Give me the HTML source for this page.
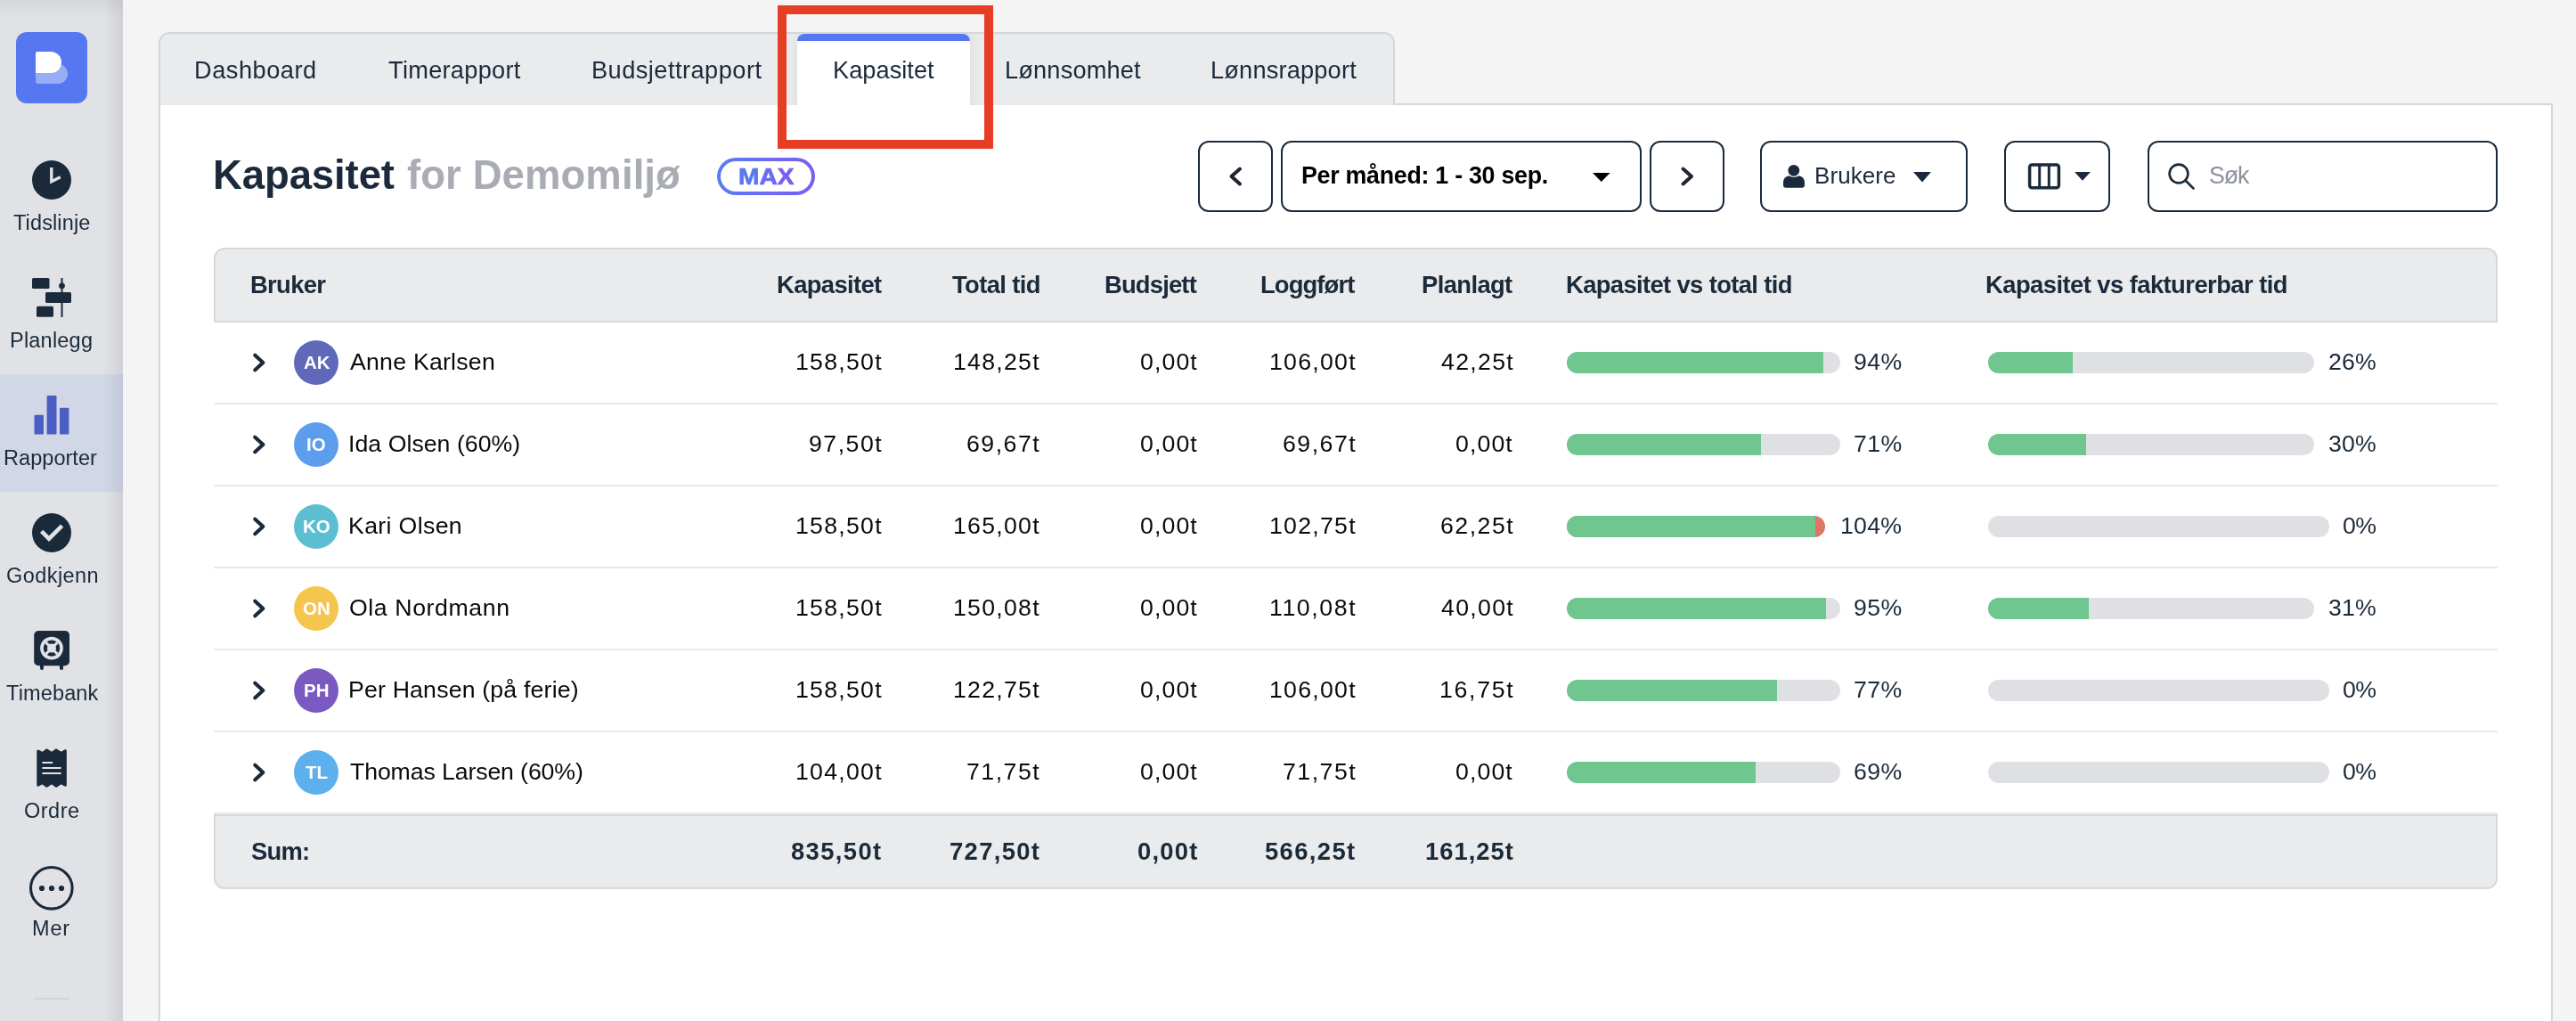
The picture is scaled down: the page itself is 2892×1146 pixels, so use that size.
<!DOCTYPE html><html><head><meta charset="utf-8"><style>
html,body{margin:0;padding:0;}body{width:2892px;height:1146px;position:relative;overflow:hidden;background:#f4f4f4;font-family:"Liberation Sans", sans-serif;}
.a{position:absolute;box-sizing:border-box;}.t{position:absolute;white-space:nowrap;line-height:1;will-change:transform;}

</style></head><body>
<div class="a" style="left:0;top:0;width:138px;height:1146px;background:#e1e2e6"></div>
<div class="a" style="left:0;top:420px;width:138px;height:132px;background:#d2d7e7"></div>
<div class="a" style="left:116px;top:0;width:22px;height:1146px;background:linear-gradient(to right,rgba(40,45,60,0),rgba(40,45,60,0.09))"></div>
<div class="a" style="left:0;top:0;width:138px;height:22px;background:linear-gradient(to bottom,rgba(40,45,60,0.06),rgba(40,45,60,0))"></div>
<div class="a" style="left:18px;top:36px;width:80px;height:80px;border-radius:12px;background:#5578f0"></div>
<div class="a" style="left:40px;top:71.5px;width:36px;height:22.5px;border-radius:0 11px 11px 3px;background:#99acf6"></div>
<div class="a" style="left:40px;top:58px;width:29px;height:24px;border-radius:2px 12px 12px 0;background:#fff"></div>
<svg class="a" style="left:0;top:0" width="138" height="1146" viewBox="0 0 138 1146"><circle cx="58" cy="202" r="22" fill="#1b2a3a"/><path d="M57.8 188 V203.8 L67.8 198.8" fill="none" stroke="#e1e2e6" stroke-width="3.4" stroke-linejoin="miter"/><rect x="36" y="312" width="19.5" height="12" rx="1.5" fill="#1b2a3a"/><rect x="51" y="328" width="29" height="12" rx="1.5" fill="#1b2a3a"/><rect x="41" y="343.7" width="19" height="12" rx="1.5" fill="#1b2a3a"/><rect x="68.5" y="312" width="2" height="44" fill="#1b2a3a"/><circle cx="69.5" cy="320.8" r="3.4" fill="#1b2a3a"/><rect x="38.5" y="465.8" width="10.5" height="21.8" rx="1.2" fill="#4a5ec3"/><rect x="52.6" y="444" width="10.9" height="43.6" rx="1.2" fill="#4a5ec3"/><rect x="67" y="457.7" width="10.4" height="29.9" rx="1.2" fill="#4a5ec3"/><circle cx="58" cy="598" r="22" fill="#1b2a3a"/><path d="M46.6 596.3 L55 604.7 L69.6 590.1" fill="none" stroke="#e1e2e6" stroke-width="4.6"/><rect x="38.2" y="708" width="39.8" height="39.2" rx="5" fill="#1b2a3a"/><rect x="45" y="744" width="4" height="8" rx="2" fill="#1b2a3a"/><rect x="67" y="744" width="4" height="8" rx="2" fill="#1b2a3a"/><circle cx="58" cy="727.6" r="12.9" fill="#e1e2e6"/><circle cx="58" cy="727.6" r="9.2" fill="#1b2a3a"/><path d="M51.5 721.1 L64.5 734.1 M64.5 721.1 L51.5 734.1" stroke="#e1e2e6" stroke-width="3"/><circle cx="58" cy="727.6" r="5" fill="#e1e2e6"/><path d="M42.8 843 L47.4 845.6 L52.5 841.9 L58 845.6 L63.1 841.9 L68.6 845.6 L73.3 842.7 L73.3 881.2 L68.6 878.6 L63.1 882.2 L58 878.6 L52.5 882.2 L47.4 878.6 L42.8 881.2 Z" fill="#1b2a3a" stroke="#1b2a3a" stroke-width="3" stroke-linejoin="round"/><rect x="47.4" y="855" width="11.8" height="2" fill="#e1e2e6"/><rect x="47.4" y="861" width="21.2" height="2" fill="#e1e2e6"/><rect x="47.4" y="867" width="21.2" height="2" fill="#e1e2e6"/><circle cx="57.8" cy="996.8" r="23.3" fill="none" stroke="#1b2a3a" stroke-width="3.1"/><circle cx="47" cy="997" r="3.1" fill="#1b2a3a"/><circle cx="58" cy="997" r="3.1" fill="#1b2a3a"/><circle cx="69" cy="997" r="3.1" fill="#1b2a3a"/><rect x="38" y="1120" width="40" height="2" fill="#d3d5da"/></svg>
<div class="a" style="left:178px;top:116px;width:2688px;height:1100px;background:#fff;border:2px solid #d3d7dc"></div>
<div class="a" style="left:178px;top:36px;width:1388px;height:82px;background:#eaebed;border:2px solid #d3d7dc;border-bottom:0;border-radius:12px 12px 0 0"></div>
<div class="a" style="left:860px;top:38px;width:264px;height:80px;overflow:hidden"><div class="a" style="left:35px;top:0;width:194px;height:90px;background:#fff;border-radius:8px 8px 0 0;overflow:hidden;box-shadow:0 0 14px rgba(30,40,60,0.08)"><div style="height:8px;background:#5578f0"></div></div></div>
<div class="a" style="left:873px;top:6px;width:242px;height:161px;border:10px solid #e83d25"></div>
<div class="a" style="left:805.2px;top:177px;width:109.5px;height:41.8px;border-radius:21px;padding:3.8px;background:linear-gradient(90deg,#5a7cf2,#7b5ef0)"><div style="width:100%;height:100%;background:#fff;border-radius:18px"></div></div>
<div class="a" style="left:1345.2px;top:158px;width:83.39999999999986px;height:79.5px;border:2.2px solid #1b2a3a;border-radius:12px;background:#fff"></div>
<div class="a" style="left:1437.6px;top:158px;width:405.4000000000001px;height:79.5px;border:2.2px solid #1b2a3a;border-radius:12px;background:#fff"></div>
<div class="a" style="left:1852px;top:158px;width:83.5px;height:79.5px;border:2.2px solid #1b2a3a;border-radius:12px;background:#fff"></div>
<div class="a" style="left:1976.4px;top:158px;width:233.0999999999999px;height:79.5px;border:2.2px solid #1b2a3a;border-radius:12px;background:#fff"></div>
<div class="a" style="left:2250.4px;top:158px;width:119.09999999999991px;height:79.5px;border:2.2px solid #1b2a3a;border-radius:12px;background:#fff"></div>
<div class="a" style="left:2410.5px;top:158px;width:393.0999999999999px;height:79.5px;border:2.2px solid #1b2a3a;border-radius:12px;background:#fff"></div>
<svg class="a" style="left:0;top:0" width="2892" height="260" viewBox="0 0 2892 260"><path d="M1392 189.5 L1382.5 198 L1392 206.5" fill="none" stroke="#1e2530" stroke-width="4" stroke-linecap="round" stroke-linejoin="round"/><path d="M1889.5 189.5 L1899 198 L1889.5 206.5" fill="none" stroke="#1e2530" stroke-width="4" stroke-linecap="round" stroke-linejoin="round"/><path d="M1788 194 L1807.6 194 L1797.8 204 Z" fill="#000"/><path d="M2148 193 L2168 193 L2158 204.4 Z" fill="#1b2a3a"/><path d="M2329 193 L2347 193 L2338 202.8 Z" fill="#1b2a3a"/><circle cx="2013.8" cy="191.3" r="6.4" fill="#1b2a3a"/><path d="M2005 210.8 L2023 210.8 Q2026 210.8 2026 207.8 L2026 205 Q2026 198.5 2019.5 197.3 Q2014 200.3 2008.5 197.3 Q2002 198.5 2002 205 L2002 207.8 Q2002 210.8 2005 210.8 Z" fill="#1b2a3a"/><rect x="2278.6" y="185.1" width="32.8" height="25.6" rx="2.6" fill="none" stroke="#1b2a3a" stroke-width="3.5"/><rect x="2288.2" y="185" width="3" height="26" fill="#1b2a3a"/><rect x="2298.8" y="185" width="3" height="26" fill="#1b2a3a"/><circle cx="2446" cy="195" r="10.4" fill="none" stroke="#1b2a3a" stroke-width="2.6"/><path d="M2453.5 202.5 L2462.5 211.5" stroke="#1b2a3a" stroke-width="2.6" stroke-linecap="round"/></svg>
<div class="a" style="left:240px;top:278px;width:2564px;height:84px;background:#eaebed;border:2px solid #d5d8dc;border-radius:12px 12px 0 0"></div>
<div class="a" style="left:240px;top:914px;width:2564px;height:84px;background:#eaebed;border:2px solid #d5d8dc;border-radius:0 0 12px 12px"></div>
<div class="a" style="left:240px;top:452px;width:2564px;height:2px;background:#e7e9ec"></div>
<div class="a" style="left:240px;top:544px;width:2564px;height:2px;background:#e7e9ec"></div>
<div class="a" style="left:240px;top:636px;width:2564px;height:2px;background:#e7e9ec"></div>
<div class="a" style="left:240px;top:728px;width:2564px;height:2px;background:#e7e9ec"></div>
<div class="a" style="left:240px;top:820px;width:2564px;height:2px;background:#e7e9ec"></div>
<div class="a" style="left:240px;top:912px;width:2564px;height:2px;background:#e7e9ec"></div>
<div class="a" style="left:1759px;top:395px;width:306.6999999999998px;height:24px;border-radius:12px;background:#dfe0e4;overflow:hidden"><div style="width:288.3px;height:24px;background:#6fc68e"></div></div>
<div class="a" style="left:2232px;top:395px;width:365.5999999999999px;height:24px;border-radius:12px;background:#dfe0e4;overflow:hidden"><div style="width:95.1px;height:24px;background:#6fc68e"></div></div>
<div class="a" style="left:1759px;top:487px;width:306.6999999999998px;height:24px;border-radius:12px;background:#dfe0e4;overflow:hidden"><div style="width:217.8px;height:24px;background:#6fc68e"></div></div>
<div class="a" style="left:2232px;top:487px;width:365.5999999999999px;height:24px;border-radius:12px;background:#dfe0e4;overflow:hidden"><div style="width:109.7px;height:24px;background:#6fc68e"></div></div>
<div class="a" style="left:1759px;top:579px;width:290px;height:24px;border-radius:12px;background:#dc7767;overflow:hidden"><div style="width:278.8px;height:24px;background:#6fc68e"></div></div>
<div class="a" style="left:2232px;top:579px;width:383px;height:24px;border-radius:12px;background:#dfe0e4;overflow:hidden"><div style="width:0.0px;height:24px;background:#6fc68e"></div></div>
<div class="a" style="left:1759px;top:671px;width:306.6999999999998px;height:24px;border-radius:12px;background:#dfe0e4;overflow:hidden"><div style="width:291.4px;height:24px;background:#6fc68e"></div></div>
<div class="a" style="left:2232px;top:671px;width:365.5999999999999px;height:24px;border-radius:12px;background:#dfe0e4;overflow:hidden"><div style="width:113.3px;height:24px;background:#6fc68e"></div></div>
<div class="a" style="left:1759px;top:763px;width:306.6999999999998px;height:24px;border-radius:12px;background:#dfe0e4;overflow:hidden"><div style="width:236.2px;height:24px;background:#6fc68e"></div></div>
<div class="a" style="left:2232px;top:763px;width:383px;height:24px;border-radius:12px;background:#dfe0e4;overflow:hidden"><div style="width:0.0px;height:24px;background:#6fc68e"></div></div>
<div class="a" style="left:1759px;top:855px;width:306.6999999999998px;height:24px;border-radius:12px;background:#dfe0e4;overflow:hidden"><div style="width:211.6px;height:24px;background:#6fc68e"></div></div>
<div class="a" style="left:2232px;top:855px;width:383px;height:24px;border-radius:12px;background:#dfe0e4;overflow:hidden"><div style="width:0.0px;height:24px;background:#6fc68e"></div></div>
<svg class="a" style="left:0;top:0" width="2892" height="1146" viewBox="0 0 2892 1146">
<path d="M286.3 398.7 L295.3 407 L286.3 415.3" fill="none" stroke="#1b2a3a" stroke-width="4.2" stroke-linecap="round" stroke-linejoin="round"/>
<circle cx="355" cy="407" r="25" fill="#5f68b9"/>
<path d="M286.3 490.7 L295.3 499 L286.3 507.3" fill="none" stroke="#1b2a3a" stroke-width="4.2" stroke-linecap="round" stroke-linejoin="round"/>
<circle cx="355" cy="499" r="25" fill="#5c9ded"/>
<path d="M286.3 582.7 L295.3 591 L286.3 599.3" fill="none" stroke="#1b2a3a" stroke-width="4.2" stroke-linecap="round" stroke-linejoin="round"/>
<circle cx="355" cy="591" r="25" fill="#5bbfd1"/>
<path d="M286.3 674.7 L295.3 683 L286.3 691.3" fill="none" stroke="#1b2a3a" stroke-width="4.2" stroke-linecap="round" stroke-linejoin="round"/>
<circle cx="355" cy="683" r="25" fill="#f4c64e"/>
<path d="M286.3 766.7 L295.3 775 L286.3 783.3" fill="none" stroke="#1b2a3a" stroke-width="4.2" stroke-linecap="round" stroke-linejoin="round"/>
<circle cx="355" cy="775" r="25" fill="#7a5ac0"/>
<path d="M286.3 858.7 L295.3 867 L286.3 875.3" fill="none" stroke="#1b2a3a" stroke-width="4.2" stroke-linecap="round" stroke-linejoin="round"/>
<circle cx="355" cy="867" r="25" fill="#5cb0ee"/>
</svg>
<div class='t' style='left:15.00px;top:239.22px;font-size:23.5px;color:#1b2a3a;letter-spacing:0.125px;'>Tidslinje</div>
<div class='t' style='left:11.25px;top:371.22px;font-size:23.5px;color:#1b2a3a;letter-spacing:0.214px;'>Planlegg</div>
<div class='t' style='left:4.30px;top:503.23px;font-size:23.5px;color:#1b2a3a;letter-spacing:0.050px;'>Rapporter</div>
<div class='t' style='left:6.50px;top:635.23px;font-size:23.5px;color:#1b2a3a;letter-spacing:0.429px;'>Godkjenn</div>
<div class='t' style='left:6.50px;top:767.23px;font-size:23.5px;color:#1b2a3a;letter-spacing:0.143px;'>Timebank</div>
<div class='t' style='left:27.00px;top:899.23px;font-size:23.5px;color:#1b2a3a;letter-spacing:0.500px;'>Ordre</div>
<div class='t' style='left:35.70px;top:1031.23px;font-size:23.5px;color:#1b2a3a;letter-spacing:0.800px;'>Mer</div>
<div class='t' style='left:218.30px;top:64.88px;font-size:27.2px;color:#1b2a3a;letter-spacing:0.525px;'>Dashboard</div>
<div class='t' style='left:435.80px;top:64.88px;font-size:27.2px;color:#1b2a3a;letter-spacing:0.280px;'>Timerapport</div>
<div class='t' style='left:663.60px;top:64.88px;font-size:27.2px;color:#1b2a3a;letter-spacing:0.471px;'>Budsjettrapport</div>
<div class='t' style='left:934.70px;top:64.88px;font-size:27.2px;color:#1b2a3a;letter-spacing:0.037px;'>Kapasitet</div>
<div class='t' style='left:1128.00px;top:64.88px;font-size:27.2px;color:#1b2a3a;letter-spacing:0.167px;'>Lønnsomhet</div>
<div class='t' style='left:1359.00px;top:64.88px;font-size:27.2px;color:#1b2a3a;letter-spacing:0.182px;'>Lønnsrapport</div>
<div class='t' style='left:239.40px;top:174.32px;font-size:45.5px;color:#1b2a3a;font-weight:700;letter-spacing:-0.100px;'>Kapasitet</div>
<div class='t' style='left:456.60px;top:174.32px;font-size:45.5px;color:#a9adb3;font-weight:700;letter-spacing:0.083px;'>for Demomiljø</div>
<div class='t' style='left:828.86px;top:185.25px;font-size:26.3px;color:#6a6ef0;font-weight:700;transform:scaleX(1.0696);transform-origin:0 0;'><span style="color:#5b78f0;-webkit-text-stroke:0.7px #5b78f0">M</span><span style="color:#6a6cef;-webkit-text-stroke:0.7px #6a6cef">A</span><span style="color:#785fef;-webkit-text-stroke:0.7px #785fef">X</span></div>
<div class='t' style='left:1461.30px;top:184.22px;font-size:26.8px;color:#000;font-weight:700;letter-spacing:-0.276px;'>Per måned: 1 - 30 sep.</div>
<div class='t' style='left:2036.80px;top:183.90px;font-size:26px;color:#1b2a3a;letter-spacing:0.067px;'>Brukere</div>
<div class='t' style='left:2480.20px;top:184.22px;font-size:26.8px;color:#8a929c;letter-spacing:-1.100px;'>Søk</div>
<div class='t' style='left:280.50px;top:306.21px;font-size:27.4px;color:#1b2a3a;font-weight:700;letter-spacing:-0.660px;'>Bruker</div>
<div class='t' style='left:872.30px;top:306.21px;font-size:27.4px;color:#1b2a3a;font-weight:700;letter-spacing:-0.637px;'>Kapasitet</div>
<div class='t' style='left:1068.80px;top:306.21px;font-size:27.4px;color:#1b2a3a;font-weight:700;letter-spacing:-0.625px;'>Total tid</div>
<div class='t' style='left:1239.80px;top:306.21px;font-size:27.4px;color:#1b2a3a;font-weight:700;letter-spacing:-0.829px;'>Budsjett</div>
<div class='t' style='left:1414.70px;top:306.21px;font-size:27.4px;color:#1b2a3a;font-weight:700;letter-spacing:-0.900px;'>Loggført</div>
<div class='t' style='left:1596.00px;top:306.21px;font-size:27.4px;color:#1b2a3a;font-weight:700;letter-spacing:-0.614px;'>Planlagt</div>
<div class='t' style='left:1758.00px;top:306.21px;font-size:27.4px;color:#1b2a3a;font-weight:700;letter-spacing:-0.638px;'>Kapasitet vs total tid</div>
<div class='t' style='left:2228.90px;top:306.21px;font-size:27.4px;color:#1b2a3a;font-weight:700;letter-spacing:-0.563px;'>Kapasitet vs fakturerbar tid</div>
<div class='t' style='left:340.50px;top:396.88px;font-size:20.5px;color:#fff;font-weight:700;'>AK</div>
<div class='t' style='left:392.50px;top:393.11px;font-size:26.7px;color:#0a0a0a;letter-spacing:0.227px;'>Anne Karlsen</div>
<div class='t' style='left:892.90px;top:393.11px;font-size:26.7px;color:#0a0a0a;letter-spacing:1.250px;'>158,50t</div>
<div class='t' style='left:1070.30px;top:393.11px;font-size:26.7px;color:#0a0a0a;letter-spacing:1.250px;'>148,25t</div>
<div class='t' style='left:1279.60px;top:393.11px;font-size:26.7px;color:#0a0a0a;letter-spacing:1.100px;'>0,00t</div>
<div class='t' style='left:1425.00px;top:393.11px;font-size:26.7px;color:#0a0a0a;letter-spacing:1.250px;'>106,00t</div>
<div class='t' style='left:1618.00px;top:393.11px;font-size:26.7px;color:#0a0a0a;letter-spacing:1.300px;'>42,25t</div>
<div class='t' style='left:2081.20px;top:393.11px;font-size:26.7px;color:#1b2a3a;letter-spacing:0.400px;'>94%</div>
<div class='t' style='left:2613.90px;top:393.11px;font-size:26.7px;color:#1b2a3a;letter-spacing:0.200px;'>26%</div>
<div class='t' style='left:344.00px;top:488.88px;font-size:20.5px;color:#fff;font-weight:700;'>IO</div>
<div class='t' style='left:390.50px;top:485.11px;font-size:26.7px;color:#0a0a0a;letter-spacing:0.029px;'>Ida Olsen (60%)</div>
<div class='t' style='left:907.90px;top:485.11px;font-size:26.7px;color:#0a0a0a;letter-spacing:1.500px;'>97,50t</div>
<div class='t' style='left:1085.30px;top:485.11px;font-size:26.7px;color:#0a0a0a;letter-spacing:1.500px;'>69,67t</div>
<div class='t' style='left:1279.60px;top:485.11px;font-size:26.7px;color:#0a0a0a;letter-spacing:1.100px;'>0,00t</div>
<div class='t' style='left:1440.00px;top:485.11px;font-size:26.7px;color:#0a0a0a;letter-spacing:1.500px;'>69,67t</div>
<div class='t' style='left:1634.10px;top:485.11px;font-size:26.7px;color:#0a0a0a;letter-spacing:1.100px;'>0,00t</div>
<div class='t' style='left:2081.20px;top:485.11px;font-size:26.7px;color:#1b2a3a;letter-spacing:0.400px;'>71%</div>
<div class='t' style='left:2613.90px;top:485.11px;font-size:26.7px;color:#1b2a3a;letter-spacing:0.200px;'>30%</div>
<div class='t' style='left:339.50px;top:580.88px;font-size:20.5px;color:#fff;font-weight:700;'>KO</div>
<div class='t' style='left:390.50px;top:577.10px;font-size:26.7px;color:#0a0a0a;letter-spacing:0.344px;'>Kari Olsen</div>
<div class='t' style='left:892.90px;top:577.10px;font-size:26.7px;color:#0a0a0a;letter-spacing:1.250px;'>158,50t</div>
<div class='t' style='left:1070.30px;top:577.10px;font-size:26.7px;color:#0a0a0a;letter-spacing:1.250px;'>165,00t</div>
<div class='t' style='left:1279.60px;top:577.10px;font-size:26.7px;color:#0a0a0a;letter-spacing:1.100px;'>0,00t</div>
<div class='t' style='left:1425.00px;top:577.10px;font-size:26.7px;color:#0a0a0a;letter-spacing:1.250px;'>102,75t</div>
<div class='t' style='left:1617.00px;top:577.10px;font-size:26.7px;color:#0a0a0a;letter-spacing:1.500px;'>62,25t</div>
<div class='t' style='left:2066.30px;top:577.10px;font-size:26.7px;color:#1b2a3a;letter-spacing:0.233px;'>104%</div>
<div class='t' style='left:2630.00px;top:577.10px;font-size:26.7px;color:#1b2a3a;letter-spacing:-0.700px;'>0%</div>
<div class='t' style='left:339.50px;top:672.88px;font-size:20.5px;color:#fff;font-weight:700;'>ON</div>
<div class='t' style='left:391.50px;top:669.10px;font-size:26.7px;color:#0a0a0a;letter-spacing:0.591px;'>Ola Nordmann</div>
<div class='t' style='left:892.90px;top:669.10px;font-size:26.7px;color:#0a0a0a;letter-spacing:1.250px;'>158,50t</div>
<div class='t' style='left:1070.30px;top:669.10px;font-size:26.7px;color:#0a0a0a;letter-spacing:1.250px;'>150,08t</div>
<div class='t' style='left:1279.60px;top:669.10px;font-size:26.7px;color:#0a0a0a;letter-spacing:1.100px;'>0,00t</div>
<div class='t' style='left:1425.00px;top:669.10px;font-size:26.7px;color:#0a0a0a;letter-spacing:1.583px;'>110,08t</div>
<div class='t' style='left:1618.00px;top:669.10px;font-size:26.7px;color:#0a0a0a;letter-spacing:1.300px;'>40,00t</div>
<div class='t' style='left:2081.20px;top:669.10px;font-size:26.7px;color:#1b2a3a;letter-spacing:0.400px;'>95%</div>
<div class='t' style='left:2613.90px;top:669.10px;font-size:26.7px;color:#1b2a3a;letter-spacing:0.200px;'>31%</div>
<div class='t' style='left:340.50px;top:764.88px;font-size:20.5px;color:#fff;font-weight:700;'>PH</div>
<div class='t' style='left:390.50px;top:761.10px;font-size:26.7px;color:#0a0a0a;letter-spacing:0.175px;'>Per Hansen (på ferie)</div>
<div class='t' style='left:892.90px;top:761.10px;font-size:26.7px;color:#0a0a0a;letter-spacing:1.250px;'>158,50t</div>
<div class='t' style='left:1070.30px;top:761.10px;font-size:26.7px;color:#0a0a0a;letter-spacing:1.250px;'>122,75t</div>
<div class='t' style='left:1279.60px;top:761.10px;font-size:26.7px;color:#0a0a0a;letter-spacing:1.100px;'>0,00t</div>
<div class='t' style='left:1425.00px;top:761.10px;font-size:26.7px;color:#0a0a0a;letter-spacing:1.250px;'>106,00t</div>
<div class='t' style='left:1616.00px;top:761.10px;font-size:26.7px;color:#0a0a0a;letter-spacing:1.700px;'>16,75t</div>
<div class='t' style='left:2081.20px;top:761.10px;font-size:26.7px;color:#1b2a3a;letter-spacing:0.400px;'>77%</div>
<div class='t' style='left:2630.00px;top:761.10px;font-size:26.7px;color:#1b2a3a;letter-spacing:-0.700px;'>0%</div>
<div class='t' style='left:342.50px;top:856.88px;font-size:20.5px;color:#fff;font-weight:700;'>TL</div>
<div class='t' style='left:392.50px;top:853.10px;font-size:26.7px;color:#0a0a0a;letter-spacing:-0.122px;'>Thomas Larsen (60%)</div>
<div class='t' style='left:892.90px;top:853.10px;font-size:26.7px;color:#0a0a0a;letter-spacing:1.250px;'>104,00t</div>
<div class='t' style='left:1085.30px;top:853.10px;font-size:26.7px;color:#0a0a0a;letter-spacing:1.500px;'>71,75t</div>
<div class='t' style='left:1279.60px;top:853.10px;font-size:26.7px;color:#0a0a0a;letter-spacing:1.100px;'>0,00t</div>
<div class='t' style='left:1440.00px;top:853.10px;font-size:26.7px;color:#0a0a0a;letter-spacing:1.500px;'>71,75t</div>
<div class='t' style='left:1634.10px;top:853.10px;font-size:26.7px;color:#0a0a0a;letter-spacing:1.100px;'>0,00t</div>
<div class='t' style='left:2081.20px;top:853.10px;font-size:26.7px;color:#1b2a3a;letter-spacing:0.400px;'>69%</div>
<div class='t' style='left:2630.00px;top:853.10px;font-size:26.7px;color:#1b2a3a;letter-spacing:-0.700px;'>0%</div>
<div class='t' style='left:281.50px;top:941.91px;font-size:27.4px;color:#1b2a3a;font-weight:700;letter-spacing:-0.767px;'>Sum:</div>
<div class='t' style='left:888.10px;top:941.91px;font-size:27.4px;color:#1b2a3a;font-weight:700;letter-spacing:1.383px;'>835,50t</div>
<div class='t' style='left:1065.80px;top:941.91px;font-size:27.4px;color:#1b2a3a;font-weight:700;letter-spacing:1.333px;'>727,50t</div>
<div class='t' style='left:1277.00px;top:941.91px;font-size:27.4px;color:#1b2a3a;font-weight:700;letter-spacing:1.250px;'>0,00t</div>
<div class='t' style='left:1420.20px;top:941.91px;font-size:27.4px;color:#1b2a3a;font-weight:700;letter-spacing:1.383px;'>566,25t</div>
<div class='t' style='left:1599.60px;top:941.91px;font-size:27.4px;color:#1b2a3a;font-weight:700;letter-spacing:0.983px;'>161,25t</div>
</body></html>
